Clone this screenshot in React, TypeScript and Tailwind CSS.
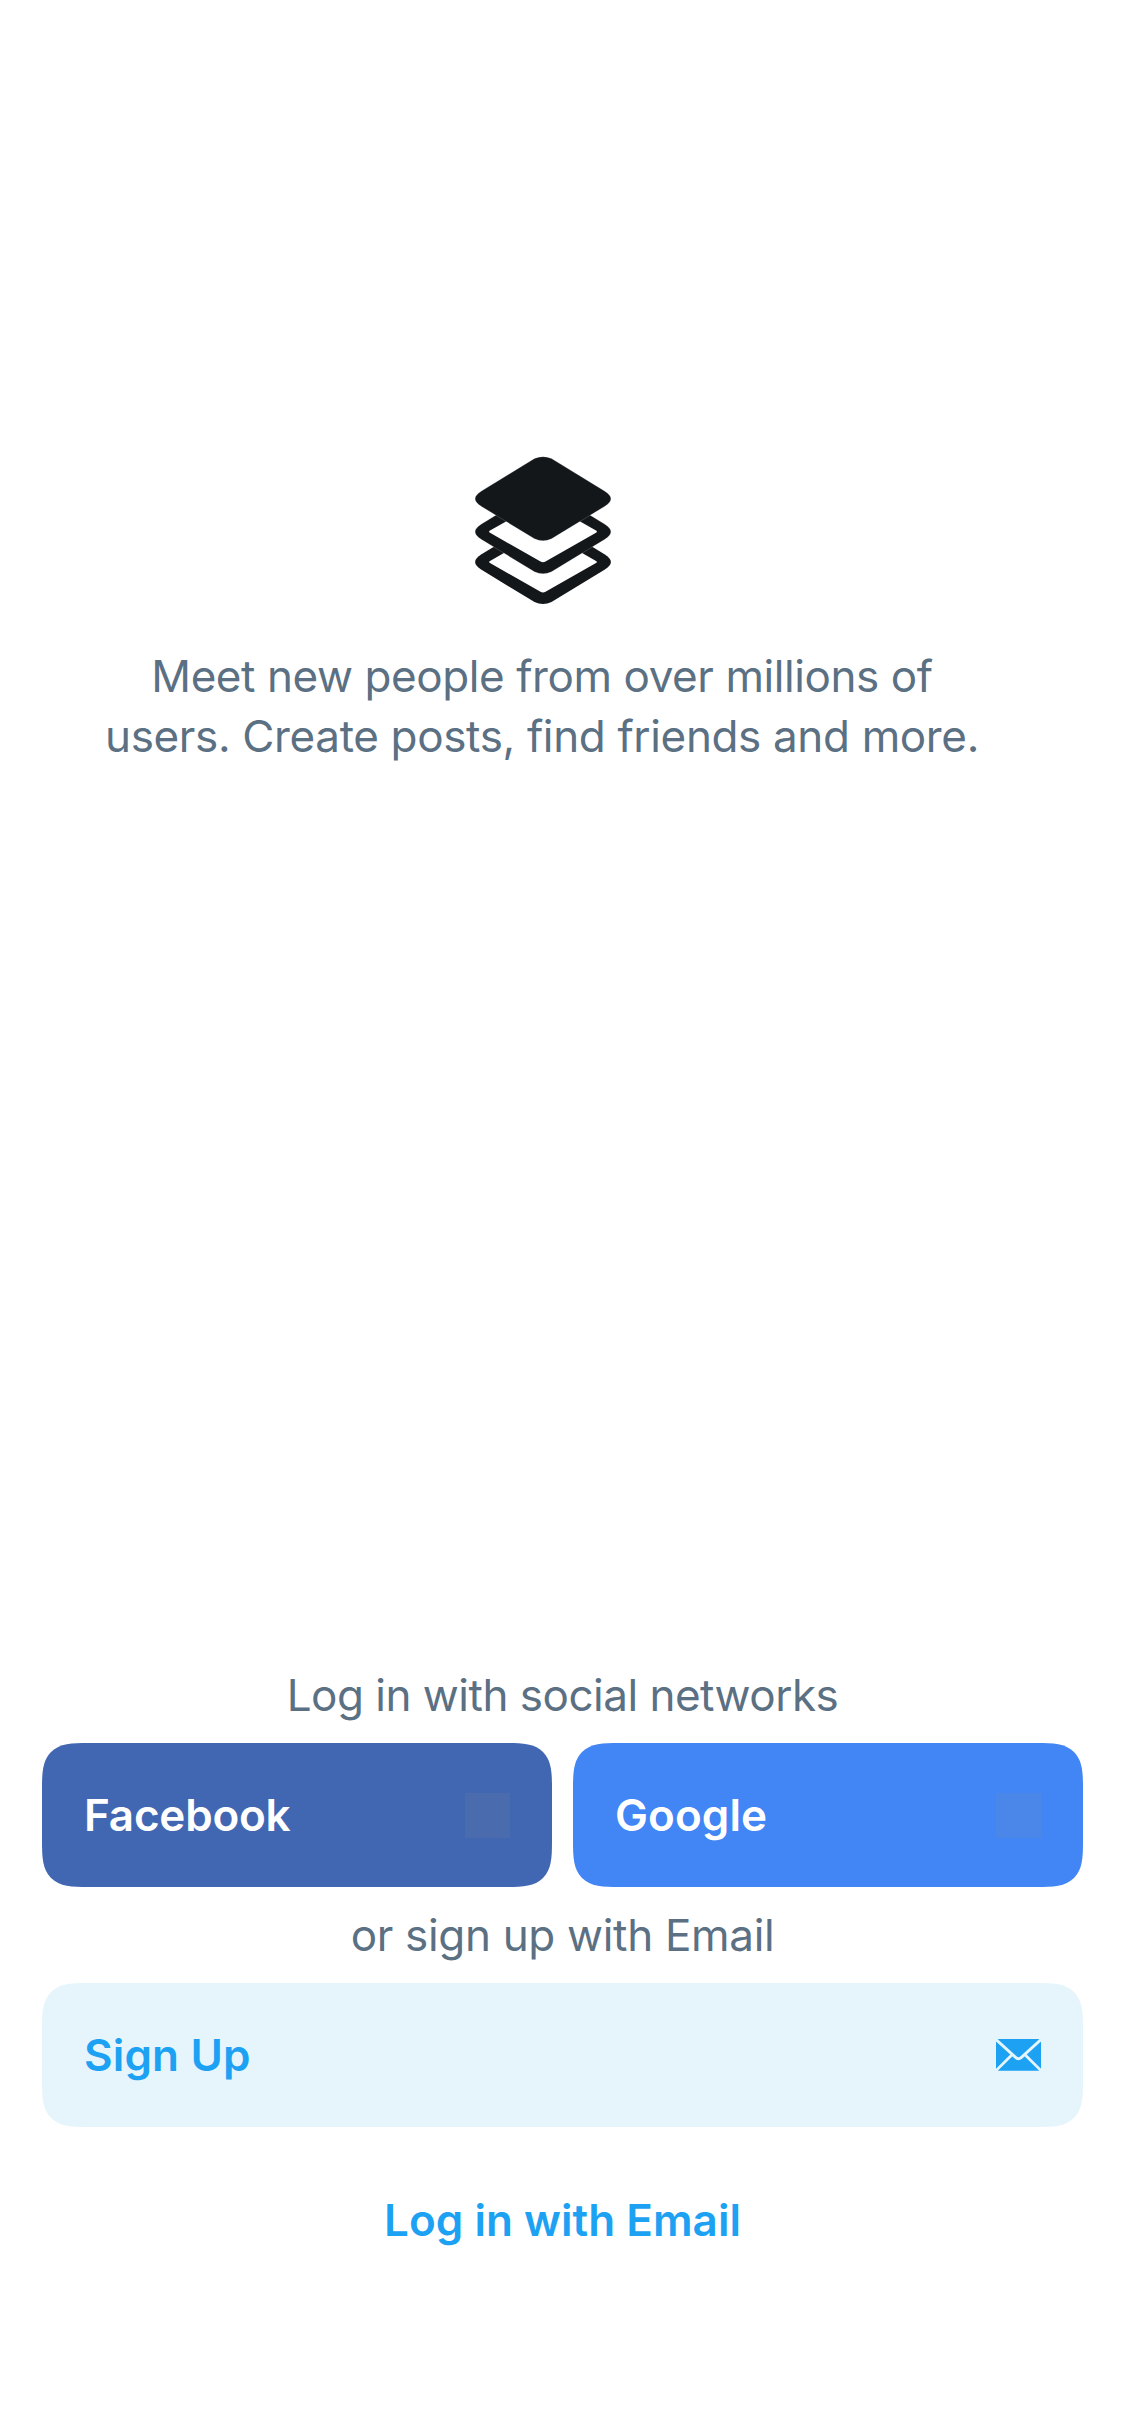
import type { ReactNode } from "react";

function LayersLogo() {
  const outer =
    "M59.5 2.6 Q68 -1.2 76.5 2.6 L129.5 35 C138 40.5 138 45 129.5 50.5 L76.5 82.8 Q68 86.6 59.5 82.8 L6.5 50.5 C-2 45 -2 40.5 6.5 35 Z";
  const inner =
    "M65.5 12.8 Q68 11.6 70.5 12.8 L121 41.6 Q122.8 42.7 121 43.8 L70.5 72.4 Q68 73.9 65.5 72.4 L15 43.8 Q13.2 42.7 15 41.6 Z";
  return (
    <svg viewBox="0 0 136 150" className="ml-[2px] h-[150px] w-[136px]" aria-label="Layers">
      <g transform="translate(0 63.3)">
        <path d={outer} fill="#14171a" />
        <path d={inner} fill="#fff" />
      </g>
      <g transform="translate(0 33)">
        <path d={outer} fill="#14171a" stroke="#fff" strokeOpacity="0.35" strokeWidth="0.5" />
        <path d={inner} fill="#fff" />
      </g>
      <path d={outer} fill="#14171a" stroke="#fff" strokeOpacity="0.35" strokeWidth="0.5" />
    </svg>
  );
}

function MailIcon() {
  return (
    <svg viewBox="0 0 45 45" className="size-[45px]" aria-label="Email">
      <rect x="0" y="6" width="45" height="31.7" rx="3" fill="#1da1f2" />
      <g fill="none" stroke="#e6f5fc" strokeWidth="2.8" transform="translate(0 5.8)">
        <path d="M-0.5 0.3 L19.6 18.6 Q22.5 21.2 25.4 18.6 L45.5 0.3" />
        <path d="M0 31.8 L16 16 M45 31.8 L29 16" />
      </g>
    </svg>
  );
}

function ActionButton({ className, label, icon }: { className: string; label: ReactNode; icon: ReactNode }) {
  return (
    <button
      className={`flex h-36 flex-1 items-center justify-between rounded-[46px] px-[42px] font-semibold [corner-shape:superellipse(1.67)] ${className}`}
    >
      {label}
      {icon}
    </button>
  );
}

export default function App() {
  return (
    <main className="flex h-[2436px] w-[1125px] flex-col bg-white px-[42px] font-['Inter','Liberation_Sans',sans-serif] text-[44px] leading-[60px] text-[#5b7083]">
      <section className="-ml-[41px] flex flex-col items-center pt-[456px]">
        <LayersLogo />
        <p className="mt-10 text-center whitespace-nowrap">
          <span className="block tracking-[-0.42px]">Meet new people from over millions of</span>
          <span className="block tracking-[-0.35px]">users. Create posts, find friends and more.</span>
        </p>
      </section>

      <section className="mt-auto flex flex-col pb-36">
        <p className="text-center leading-[96px] tracking-[-0.5px]">Log in with social networks</p>
        <div className="flex gap-[21px]">
          <ActionButton
            className="bg-[#4267b2] text-white"
            label={<span className="tracking-[-0.2px]">Facebook</span>}
            icon={<span className="size-[45px] bg-[#4a6bae]" />}
          />
          <ActionButton
            className="bg-[#4285f4] text-white"
            label={<span className="tracking-[0.1px]">Google</span>}
            icon={<span className="size-[45px] bg-[#4b86e9]" />}
          />
        </div>
        <p className="text-center leading-[96px] tracking-[-0.32px]">or sign up with Email</p>
        <div className="flex">
          <ActionButton
            className="bg-[#e6f5fc] text-[#1da1f2]"
            label={<span className="tracking-[0.15px]">Sign Up</span>}
            icon={<MailIcon />}
          />
        </div>
        <button className="mt-[21px] h-36 text-center font-semibold tracking-[0.03px] text-[#1da1f2]">
          Log in with Email
        </button>
      </section>
    </main>
  );
}
